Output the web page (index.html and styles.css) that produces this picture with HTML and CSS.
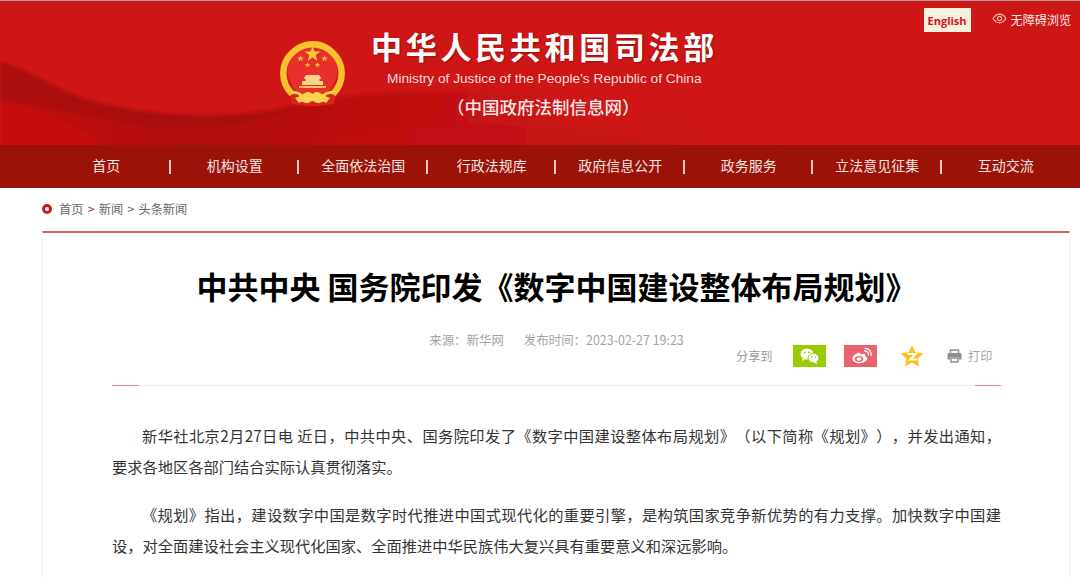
FILE: index.html
```html
<!DOCTYPE html>
<html lang="zh-CN">
<head>
<meta charset="utf-8">
<title>中共中央 国务院印发《数字中国建设整体布局规划》</title>
<link rel="stylesheet" href="styles.css">
</head>
<body>
<header class="masthead">
  <svg class="waves" viewBox="0 0 1080 144" preserveAspectRatio="none" aria-hidden="true">
    <defs>
      <linearGradient id="band" x1="0" y1="0" x2="1" y2="0">
        <stop offset="0" stop-color="#c20e0f"/>
        <stop offset=".2" stop-color="#b50d0d"/>
        <stop offset=".3" stop-color="#b30c0c"/>
        <stop offset=".5" stop-color="#bf0f10"/>
        <stop offset=".72" stop-color="#cc1515"/>
        <stop offset="1" stop-color="#ce1616"/>
      </linearGradient>
      <filter id="soft" x="-5%" y="-20%" width="110%" height="140%">
        <feGaussianBlur stdDeviation="1.500"/>
      </filter>
    </defs>
    <g filter="url(#soft)">
      <path d="M0 60C40 74 60 92 100 102C150 114 230 122 300 103C360 90 440 88 520 92C620 98 720 118 800 150L0 150Z" fill="url(#band)"/>
      <path d="M0 104C40 110 90 128 110 150L0 150Z" fill="#c60e0f"/>
      <path d="M0 60C40 74 60 92 100 102C150 114 230 122 300 103C260 125 200 130 150 126C100 120 50 104 0 100Z" fill="#a80d0d" opacity=".85"/>
      <path d="M300 150C360 128 430 122 500 124C570 126 640 132 700 150Z" fill="#c51112" opacity=".7"/>
    </g>
  </svg>
  <div class="brand">
    <svg class="emblem" viewBox="0 0 66 72" aria-hidden="true">
      <path d="M8 48L12 66L28 68H38L54 66L58 48Z" fill="#d8241c"/>
      <circle cx="32.500" cy="33" r="25" fill="#e8302a"/>
      <path d="M12 56A29 29 0 1 1 53 56" fill="none" stroke="#f6c02f" stroke-width="6.500"/>
      <path d="M11 55C17 53 21 56 25 61M54 55C48 53 44 56 40 61" fill="none" stroke="#f8d24c" stroke-width="3"/>
      <polygon points="32.500,8 34.500,13.500 40.500,13.500 35.700,17 37.500,23 32.500,19.500 27.500,23 29.300,17 24.500,13.500 30.500,13.500" fill="#f8c73a"/>
      <polygon points="20.500,17 21.400,19.500 24,19.500 22,21 22.800,23.500 20.500,22 18.200,23.500 19,21 17,19.500 19.600,19.500" fill="#f2b733"/>
      <polygon points="44.500,17 45.400,19.500 48,19.500 46,21 46.800,23.500 44.500,22 42.200,23.500 43,21 41,19.500 43.600,19.500" fill="#f2b733"/>
      <polygon points="27.500,24 28.300,26 30.500,26 28.800,27.300 29.400,29.500 27.500,28.200 25.600,29.500 26.200,27.300 24.500,26 26.700,26" fill="#f2b733"/>
      <polygon points="37.500,24 38.300,26 40.500,26 38.800,27.300 39.400,29.500 37.500,28.200 35.600,29.500 36.200,27.300 34.500,26 36.700,26" fill="#f2b733"/>
      <path d="M26 37H39L41.500 40.500H39.500V43H43V47H22V43H25.500V40.500H23.500Z" fill="#f7d58a"/>
      <path d="M19 48H46V50H19Z" fill="#f3c35a"/>
      <path d="M15 60C19 59 21 57 25 55C28 53 30 54 32.500 56C35 54 37 53 40 55C44 57 46 59 50 60L46 65C43 62 41 65 38 65C35.500 65 34 63 32.500 63C31 63 29.500 65 27 65C24 65 22 62 19 65Z" fill="#f8d24c"/>
    </svg>
    <div class="brand-text">
      <div class="brand-cn">中华人民共和国司法部</div>
      <div class="brand-en">Ministry of Justice of the People's Republic of China</div>
      <div class="brand-sub">（中国政府法制信息网）</div>
    </div>
  </div>
  <div class="tools">
    <a class="lang" href="#">English</a>
    <a class="access" href="#">
      <svg class="eye" viewBox="0 0 16 12" aria-hidden="true">
        <path d="M1 6C3 2.800 5.400 1.200 8 1.200S13 2.800 15 6C13 9.200 10.600 10.800 8 10.800S3 9.200 1 6Z" fill="none" stroke="#f3b9b5" stroke-width="1.200"/>
        <circle cx="8" cy="6" r="2.300" fill="none" stroke="#f3b9b5" stroke-width="1.200"/>
      </svg>
      无障碍浏览
    </a>
  </div>
</header>
<nav class="nav">
  <a class="nav-item" href="#">首页</a>
  <a class="nav-item" href="#">机构设置</a>
  <a class="nav-item" href="#">全面依法治国</a>
  <a class="nav-item" href="#">行政法规库</a>
  <a class="nav-item" href="#">政府信息公开</a>
  <a class="nav-item" href="#">政务服务</a>
  <a class="nav-item" href="#">立法意见征集</a>
  <a class="nav-item" href="#">互动交流</a>
</nav>
<div class="crumbs">
  <span class="crumb-dot"></span>
  <a href="#">首页</a><span class="crumb-sep red">&gt;</span><a href="#">新闻</a><span class="crumb-sep">&gt;</span><a href="#">头条新闻</a>
</div>
<main class="card">
  <h1 class="title">中共中央 国务院印发《数字中国建设整体布局规划》</h1>
  <div class="meta"><span>来源：新华网</span><span>发布时间：2023-02-27 19:23</span></div>
  <div class="share">
    <span class="share-label">分享到</span>
    <a class="share-btn wechat" href="#" aria-label="微信">
      <svg viewBox="0 0 33 22" aria-hidden="true">
        <ellipse cx="14" cy="9" rx="6.500" ry="5.500" fill="#fff"/>
        <path d="M10 13L9 16L13 14Z" fill="#fff"/>
        <ellipse cx="20.500" cy="13" rx="5.500" ry="4.700" fill="#fff" stroke="#99cc00" stroke-width="1"/>
        <path d="M23 16.500L24.500 19L20.500 17.500Z" fill="#fff"/>
        <circle cx="11.800" cy="7.500" r=".9" fill="#99cc00"/><circle cx="16" cy="7.500" r=".9" fill="#99cc00"/>
        <circle cx="18.500" cy="12" r=".8" fill="#99cc00"/><circle cx="22.500" cy="12" r=".8" fill="#99cc00"/>
      </svg>
    </a>
    <a class="share-btn weibo" href="#" aria-label="微博">
      <svg viewBox="0 0 33 22" aria-hidden="true">
        <path d="M15 7.500C10 9 8 12 8.500 14.500C9.500 18 15 19 19 17.500C23 16 24.500 13.500 22.500 12C21.500 11.500 21 11.500 21.300 10.500C21.800 8.500 19.500 8 16.500 9.500C16.300 8.500 16.300 7.500 15 7.500Z" fill="#fff"/>
        <ellipse cx="15" cy="14" rx="4.300" ry="3" fill="#e9636d"/>
        <ellipse cx="15" cy="14" rx="2.600" ry="1.700" fill="#fff"/>
        <path d="M20 6C22.500 5.500 25 7.500 24.500 10.500M20.500 3.500C24.500 3 28 6.500 27 11" fill="none" stroke="#fff" stroke-width="1.300"/>
      </svg>
    </a>
    <a class="share-btn qzone" href="#" aria-label="QQ空间">
      <svg viewBox="0 0 24 22" aria-hidden="true">
        <polygon points="12,0.500 15.200,7.200 23.500,8.300 17.500,13.500 19.200,21.500 12,17.500 4.800,21.500 6.500,13.500 0.500,8.300 8.800,7.200" fill="#fdbe15"/>
        <path d="M7.500 9H16L10 14.500H17" fill="none" stroke="#fff" stroke-width="1.800"/>
      </svg>
    </a>
    <a class="print" href="#">
      <svg viewBox="0 0 15 14" aria-hidden="true">
        <path d="M3.500 4V1H11.500V4" fill="none" stroke="#8f8f8f" stroke-width="1.400"/>
        <path d="M2 4H13C14 4 14.500 4.700 14.500 5.500V10.500H12V8H3V10.500H.5V5.500C.5 4.700 1 4 2 4Z" fill="#8f8f8f"/>
        <path d="M4 9H11V13H4Z" fill="none" stroke="#8f8f8f" stroke-width="1.400"/>
      </svg>
      打印
    </a>
  </div>
  <div class="rule"></div>
  <article class="body">
    <p>新华社北京2月27日电 近日，中共中央、国务院印发了《数字中国建设整体布局规划》（以下简称《规划》），并发出通知，<span class="keep">要求各地区</span>各部门结合实际认真贯彻落实。</p>
    <p>《规划》指出，建设数字中国是数字时代推进中国式现代化的重要引擎，是构筑国家竞争新优势的有力支撑。加快数字中国建设，对全面建设社会主义现代化国家、全面推进中华民族伟大复兴具有重要意义和深远影响。</p>
  </article>
</main>
</body>
</html>
```

FILE: styles.css
```css
* { box-sizing: border-box; }
html, body { margin: 0; height: 578px; overflow: hidden; background: #fff; }
body { font-family: "Noto Sans CJK SC", "Liberation Sans", sans-serif; color: #333; }
a { color: inherit; text-decoration: none; }

.masthead {
  position: relative;
  display: flex;
  height: 145px;
  padding-left: 280px;
  background: #ce1616;
  border-top: 1px solid #a9a3a3;
  overflow: hidden;
}
.waves { position: absolute; left: 0; top: 0; width: 100%; height: 100%; }
.brand { position: relative; display: flex; align-items: flex-start; }
.emblem { width: 66px; height: 72px; margin-top: 37px; flex: none; }
.brand-text { margin-left: 25px; display: flex; flex-direction: column; align-items: flex-start; }
.brand-cn {
  margin-top: 24px;
  font-size: 31px;
  line-height: 42px;
  font-weight: 700;
  letter-spacing: 3.700px;
  color: #fff;
  text-shadow: 1px 1px 2px rgba(90, 0, 0, .45);
  white-space: nowrap;
}
.brand-en {
  margin: 3px 0 0 16px;
  font-family: "Liberation Sans", sans-serif;
  font-size: 13.700px;
  line-height: 18px;
  color: #f6dcdc;
  white-space: nowrap;
}
.brand-sub {
  margin: 7px 0 0 76px;
  font-size: 17.500px;
  line-height: 24px;
  font-weight: 500;
  white-space: nowrap;
  color: #f8e6e6;
  text-spacing-trim: space-all;
}
.tools { position: relative; margin-left: auto; display: flex; align-items: flex-start; padding: 7px 9px 0 0; }
.lang {
  width: 47px;
  height: 24px;
  background: #f8efdc;
  color: #c8161d;
  font-family: "Open Sans", sans-serif;
  font-weight: 700;
  font-size: 11px;
  line-height: 25px;
  text-align: center;
}
.access {
  display: flex;
  align-items: center;
  gap: 4px;
  margin-left: 21px;
  height: 24px;
  font-size: 12.200px;
  color: #fbe6e4;
  white-space: nowrap;
  letter-spacing: -.1px;
}
.eye { width: 15px; height: 11px; margin-bottom: 3px; }

.nav {
  display: grid;
  grid-template-columns: repeat(8, 128.5px);
  align-items: center;
  height: 43px;
  padding-left: 42px;
  background: #9b1208;
}
.nav-item {
  height: 14px;
  padding: 0 0 4px 2px;
  display: flex;
  align-items: center;
  justify-content: center;
  font-size: 14px;
  color: #f4e4e2;
  border-right: 2px solid #e8c9c6;
  white-space: nowrap;
}
.nav-item:last-child { border-right: 0; padding-left: 0; }

.crumbs {
  display: flex;
  align-items: center;
  height: 43px;
  padding: 0 0 2px 42px;
  font-size: 12.200px;
  color: #666;
}
.crumb-dot {
  width: 10px;
  height: 10px;
  margin-right: 7px;
  border: 3px solid #cc1a1a;
  border-radius: 50%;
}
.crumb-sep { margin: 0 4.300px; }
.crumb-sep.red { color: #c0392b; }

.card {
  width: 1028px;
  min-height: 360px;
  margin-left: 42px;
  padding: 0 68px 0 69px;
  border: 1px solid #f0f0f0;
  border-top: 2px solid #d9605f;
}
.title {
  margin: 0;
  padding-top: 29px;
  font-size: 31px;
  line-height: 48px;
  font-weight: 700;
  color: #000;
  text-align: center;
  white-space: nowrap;
}
.meta {
  display: flex;
  justify-content: center;
  gap: 20px;
  margin-top: 20px;
  font-size: 12.450px;
  line-height: 20px;
  color: #a3a3a3;
}
.share {
  display: flex;
  align-items: center;
  height: 22px;
  margin-top: -5px;
  padding-left: 624px;
  font-size: 12.200px;
  color: #9a9a9a;
  white-space: nowrap;
}
.share-label { width: 57px; }
.share-btn { display: block; width: 33px; height: 22px; margin-right: 18px; }
.share-btn svg { display: block; width: 100%; height: 100%; }
.wechat { background: #99cc00; }
.weibo { background: #e9636d; }
.qzone { width: 24px; margin: 0 23px 0 5px; }
.print { display: flex; align-items: center; gap: 6px; color: #a5a5a5; }
.print svg { width: 15px; height: 14px; }
.rule {
  height: 1px;
  margin-top: 18px;
  background: linear-gradient(to right, #e58a8a 27px, #eeeeee 27px, #eeeeee calc(100% - 26px), #e58a8a calc(100% - 26px));
}
.body { padding-top: 34px; }
.body p {
  margin: 0 0 17px;
  font-size: 15.250px;
  line-height: 31px;
  text-indent: 30px;
  text-align: justify;
  color: #333;
  text-spacing-trim: space-all;
}
.keep { white-space: nowrap; }
```
